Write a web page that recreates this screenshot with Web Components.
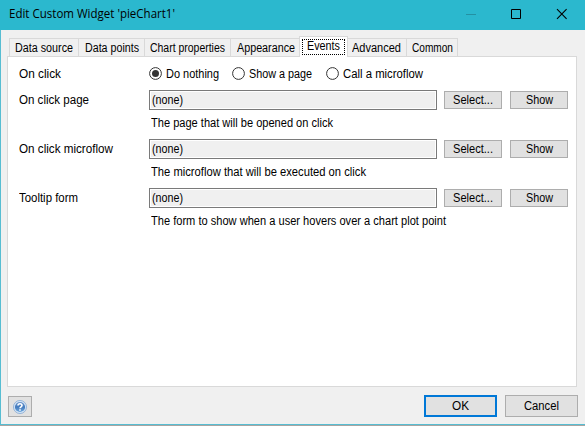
<!DOCTYPE html>
<html lang="en"><head><meta charset="utf-8"><title>Edit Custom Widget</title>
<style>
html,body{margin:0;height:100%;overflow:hidden}
body{font:12px/14px "Liberation Sans",Arial,sans-serif;color:#000}
</style></head><body>
<widget-dialog></widget-dialog>
<script>
const define=(name,html,setup)=>customElements.define(name,class extends HTMLElement{
  connectedCallback(){
    if(this.shadowRoot)return;
    this.attachShadow({mode:'open'}).innerHTML=html;
    if(setup)setup.call(this,this.shadowRoot);
  }
});

/* A single-line label condensed to the width in its "w" attribute. */
define('fit-text',`<style>:host{display:inline-block;white-space:pre;flex:none}span{display:inline-block;transform-origin:0 0}</style><span><slot></slot></span>`,function(r){
  const s=r.querySelector('span'),w=+this.getAttribute('w');
  const natural=s.getBoundingClientRect().width;
  this.style.width=w+'px';
  s.style.transform='scaleX('+w/natural+')';
});

define('push-button',`<style>:host{display:flex;box-sizing:border-box;align-items:center;justify-content:center;width:58px;height:18px;background:#e1e1e1;border:1px solid #adadad;flex:none}
:host([kind=dialog]){width:73px;height:22px}:host([kind=help]){width:24px;height:21px}:host([primary]){border:2px solid #0078d7}</style><slot></slot>`);

define('title-bar',`<style>:host{display:flex;height:30px;background:#2bb8ce;align-items:center;box-sizing:border-box;padding:0 0 2px 9px;font:12px/16px "Open Sans","Noto Sans",sans-serif}
svg{display:block;margin-left:auto;flex:none}</style><slot></slot>
<svg width="119" height="28" fill="none" stroke="#000"><path d="M0 14.5h10" stroke="#2491a3"/><path d="M45.5 9.5h9v9h-9z"/><path d="M91 9.2l9.6 9.6M100.6 9.2L91 18.8" stroke-width="1.1"/></svg>`);

define('tab-item',`<style>:host{display:flex;box-sizing:border-box;height:18px;border:1px solid #d9d9d9;border-width:1px 1px 0 0;align-items:center;justify-content:center;padding-top:1px;background:#f0f0f0;flex:none}
:host(:first-child){border-left-width:1px}
:host([active]){height:21px;background:#fff;border-left-width:1px;margin:0 -1px -1px -2px;z-index:1;padding:2px}
.in{display:flex}:host([active]) .in{box-sizing:border-box;border:1px dotted #000;width:43px;height:16px;justify-content:center;line-height:13px}</style><div class="in"><slot></slot></div>`,function(){this.style.width=this.getAttribute('width')+'px'});

define('radio-option',`<style>:host{display:flex;align-items:center;gap:4px;flex:none}svg{display:block}circle+circle{display:none}:host([checked]) circle+circle{display:block}</style>
<svg width="13" height="13"><circle cx="6.5" cy="6.5" r="5.9" fill="#fff" stroke="#333"/><circle cx="6.5" cy="6.5" r="3.5" fill="#333"/></svg><slot></slot>`);

define('picker-row',`<style>:host{display:grid;grid-template-columns:130px 288px 65px 66px;height:49px;grid-template-rows:20px 29px;align-items:center}
.box{box-sizing:border-box;width:288px;height:20px;border:1px solid #7a7a7a;background:#f0f0f0;box-shadow:inset 0 0 0 1px #fff;padding:2px 0 0 2px}
.hint{grid-column:2/5;padding:6px 0 0 2px;align-self:start}push-button{margin-left:7px}push-button+push-button{margin-left:8px}</style>
<slot name="label"></slot><div class="box"><fit-text w="31">(none)</fit-text></div><push-button><fit-text w="40">Select...</fit-text></push-button><push-button><fit-text w="27">Show</fit-text></push-button><div class="hint"><slot name="hint"></slot></div>`);

define('help-icon',`<style>:host{display:block}svg{display:block}</style>
<svg width="14" height="14" viewBox="0 0 14 14"><defs><linearGradient id="g" x2="0" y2="1"><stop stop-color="#7199ce"/><stop offset=".5" stop-color="#427abd"/><stop offset="1" stop-color="#6fa9df"/></linearGradient></defs><circle cx="7" cy="7" r="6.5" fill="#d9e8f7" stroke="#7da5d3" stroke-width=".8"/><circle cx="7" cy="7" r="5.1" fill="url(#g)"/><path d="M5 5.5C5 3.2 9 3.2 9 5.5C9 6.8 7 6.8 7 8.2M7 9.2v1.6" fill="none" stroke="#fff" stroke-width="1.6"/></svg>`);

define('widget-dialog',`<style>
:host{display:flex;flex-direction:column;box-sizing:border-box;width:585px;height:426px;background:#f0f0f0;border-bottom:1px solid #a9a5a2}
.body{flex:1;display:flex;flex-direction:column;border-left:1px solid #57bdd2;border-bottom:1px solid #57bdd2;padding:6px 7px 7px 6px}
.tabs{display:flex;align-items:flex-end;height:20px;padding-left:2px}
.panel{height:331px;box-sizing:border-box;width:570px;border:1px solid #d9d9d9;background:#fff;padding:10px 0 0 11px}
.radios{display:flex;height:13px;align-items:center;margin-bottom:10px}
.radios>fit-text{margin-right:88px}
.group{display:flex}
.foot{display:flex;align-items:flex-end;padding-top:8px;padding-left:1px;gap:8px;height:22px}
.foot [kind=help]{margin-right:auto}
</style>
<title-bar><fit-text w="166">Edit Custom Widget 'pieChart1'</fit-text></title-bar>
<div class="body"><div class="tabs">
<tab-item width="70"><fit-text w="58">Data source</fit-text></tab-item><tab-item width="66"><fit-text w="54">Data points</fit-text></tab-item><tab-item width="86"><fit-text w="75">Chart properties</fit-text></tab-item><tab-item width="70"><fit-text w="58">Appearance</fit-text></tab-item><tab-item active width="49"><fit-text w="33">Events</fit-text></tab-item><tab-item width="60"><fit-text w="49">Advanced</fit-text></tab-item><tab-item width="51"><fit-text w="41">Common</fit-text></tab-item></div>
<div class="panel">
<div class="radios"><fit-text w="42">On click</fit-text><div class="group"><radio-option checked style="width:83px"><fit-text w="53">Do nothing</fit-text></radio-option><radio-option style="width:94px"><fit-text w="63">Show a page</fit-text></radio-option><radio-option><fit-text w="80">Call a microflow</fit-text></radio-option></div></div>
<picker-row><fit-text slot="label" w="70">On click page</fit-text><fit-text slot="hint" w="182">The page that will be opened on click</fit-text></picker-row>
<picker-row><fit-text slot="label" w="94">On click microflow</fit-text><fit-text slot="hint" w="215">The microflow that will be executed on click</fit-text></picker-row>
<picker-row><fit-text slot="label" w="59">Tooltip form</fit-text><fit-text slot="hint" w="295">The form to show when a user hovers over a chart plot point</fit-text></picker-row>
</div>
<div class="foot"><push-button kind="help"><help-icon></help-icon></push-button><push-button kind="dialog" primary><fit-text w="17">OK</fit-text></push-button><push-button kind="dialog"><fit-text w="35">Cancel</fit-text></push-button></div>
</div>`);
</script></body></html>
